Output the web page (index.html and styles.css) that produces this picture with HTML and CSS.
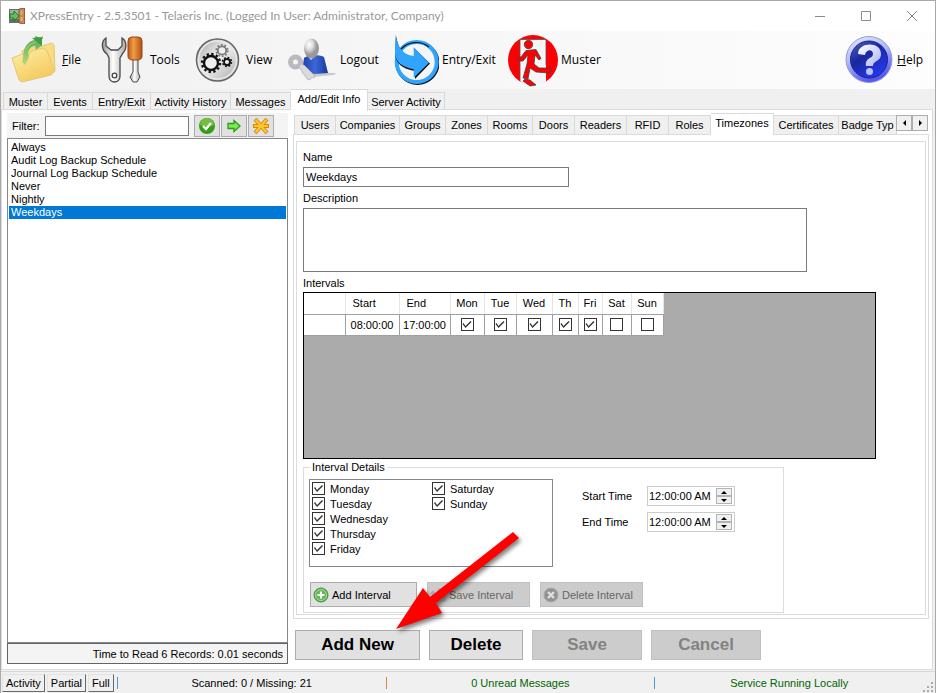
FILE: index.html
```html
<!DOCTYPE html>
<html lang="en">
<head>
<meta charset="utf-8">
<title>XPressEntry</title>
<link rel="stylesheet" href="styles.css">
</head>
<body>
<header class="titlebar">
  <svg class="app-icon" viewBox="0 0 16 16" aria-hidden="true"><rect x="0" y="1" width="11" height="14" fill="#66706a"/><rect x="1" y="2" width="9" height="9" fill="#9fb0a6"/><path d="M1 6h4V3l5 5-5 5v-3H1z" fill="#58c558" stroke="#176b24" stroke-width=".8"/><path d="M10 1l5.500-1v16l-5.500-1z" fill="#c98a52" stroke="#80451c" stroke-width=".8"/><path d="M11.500 3l2-.5v4l-2 .3zM11.500 9l2 .2v4l-2-.4z" fill="#e0b080"/></svg>
  <h1 class="title">XPressEntry - 2.5.3501 - Telaeris Inc. (Logged In User: Administrator, Company)</h1>
  <div class="window-controls">
    <button aria-label="Minimize"><svg viewBox="0 0 12 12"><path d="M1 6.500h10"/></svg></button>
    <button aria-label="Maximize"><svg viewBox="0 0 12 12"><path d="M1.500 1.500h9v9h-9z"/></svg></button>
    <button aria-label="Close"><svg viewBox="0 0 12 12"><path d="M1 1l10 10M11 1L1 11"/></svg></button>
  </div>
</header>

<nav class="toolbar">
  <button class="tool"><svg viewBox="0 0 50 54" aria-hidden="true">
    <defs><linearGradient id="folder" x2=".6" y2="1"><stop stop-color="#fff0a8"/><stop offset="1" stop-color="#f3c95d"/></linearGradient><linearGradient id="leaf" x2="0" y2="1"><stop stop-color="#3f9d42"/><stop offset="1" stop-color="#8fce78" stop-opacity=".6"/></linearGradient></defs>
    <path d="M13 18l9-6 4 3 17-5 2 2 1 26-5 3-25 4z" fill="#f8dc83" stroke="#e3c873"/>
    <path d="M3 25l13-5 3 3 3-5 12-3 4 3 8 20-4 4-29 7-3-2z" fill="url(#folder)" stroke="#e3c873"/>
    <path d="M14 25C14 12 21 7 27 7l-1-4 8 3-1-4 0 10-6 5-1-4c-6 0-8 7-6 11l-4 8c-3-3-3-4-2-7z" fill="url(#leaf)"/>
    <path d="M23 5l10-1v9" fill="#3f9d42"/>
    <path d="M16 19c3-7 6-9 11-10" fill="none" stroke="#81c66b" stroke-width="2"/></svg><span><u>F</u>ile</span></button>
  <button class="tool"><svg viewBox="0 0 50 54" aria-hidden="true">
    <defs><linearGradient id="steel"><stop stop-color="#999"/><stop offset=".45" stop-color="#fff"/><stop offset="1" stop-color="#aaa"/></linearGradient><linearGradient id="handle"><stop stop-color="#bd5b18"/><stop offset=".4" stop-color="#ef9c48"/><stop offset="1" stop-color="#b44f10"/></linearGradient></defs>
    <path d="M9 5c-5 3-5 12 1 16l2 4v18c0 8 11 8 11 0V25l3-5c4-4 4-12-1-15v8l-4 4h-7l-5-4z" fill="url(#steel)" stroke="#4a4a4a" stroke-width="1.300"/>
    <circle cx="17.500" cy="42.500" r="2.300" fill="#fff" stroke="#444" stroke-width="1.300"/>
    <path d="M36 26h5v13l2 5-3 5h-4l-3-5 3-5z" fill="url(#steel)" stroke="#4a4a4a"/>
    <path d="M31 8q0-4 4-4h6q4 0 4 4v15q0 4-5 4h-4q-5 0-5-4z" fill="url(#handle)" stroke="#974510"/></svg><span>Tools</span></button>
  <button class="tool"><svg viewBox="0 0 50 54" aria-hidden="true">
    <defs><linearGradient id="disc" x2="1" y2="1"><stop stop-color="#9a9a9a"/><stop offset=".45" stop-color="#f2f2f2"/><stop offset="1" stop-color="#a8a8a8"/></linearGradient></defs>
    <circle cx="24.500" cy="27" r="21" fill="url(#disc)" stroke="#666" stroke-width="1.500"/><circle cx="24.500" cy="27" r="19" fill="none" stroke="#e8e8e8" stroke-width="1.500"/>
    <g fill="none" stroke="#111"><circle cx="18" cy="30" r="7" stroke-width="2.400" fill="#eee"/><circle cx="18" cy="30" r="9" stroke-width="2.400" stroke-dasharray="2.350 2.360"/><circle cx="34" cy="29" r="3" stroke-width="1.800" fill="#eee"/><circle cx="34" cy="29" r="4.500" stroke-width="1.600" stroke-dasharray="1.760 1.770"/></g>
    <g fill="none" stroke="#777"><circle cx="29" cy="17.500" r="4.200" stroke-width="1.800" fill="#eee"/><circle cx="29" cy="17.500" r="5.800" stroke-width="1.600" stroke-dasharray="1.820 1.820"/></g></svg><span>View</span></button>
  <button class="tool"><svg viewBox="0 0 50 54" aria-hidden="true">
    <defs><radialGradient id="head" cx=".35" cy=".3"><stop stop-color="#fff"/><stop offset=".5" stop-color="#ddd"/><stop offset="1" stop-color="#999"/></radialGradient><linearGradient id="shirt" x2="1"><stop stop-color="#1c3fae"/><stop offset=".5" stop-color="#3d67d6"/><stop offset="1" stop-color="#17369c"/></linearGradient></defs>
    <path d="M14 39l34 1q2 1-2 2l-20 2z" fill="#c9c9cd"/>
    <path d="M15 39l2-14c2-3 16-4 20-1l4 16-13 1z" fill="url(#shirt)"/><path d="M20 22l4 5 5-5z" fill="#eef"/>
    <ellipse cx="24.500" cy="15.500" rx="7.500" ry="10" fill="url(#head)"/>
    <circle cx="8.500" cy="29" r="5" fill="none" stroke="#b9b9be" stroke-width="5"/><path d="M13 31l4 1 11 11-1 2-2-1-2 3-3-1-8-12z" fill="#dadade" stroke="#b0b0b5" stroke-width=".7"/></svg><span>Logout</span></button>
  <button class="tool"><svg viewBox="0 0 50 54" aria-hidden="true">
    <circle cx="28.500" cy="30" r="20" fill="none" stroke="#111" stroke-width="4"/>
    <circle cx="27.700" cy="29" r="20" fill="#f5f5f5" stroke="#30a5ff" stroke-width="4"/>
    <path d="M12 16A20 19 0 0 1 40 14" fill="none" stroke="#111" stroke-width="1.200"/>
    <path d="M7 3C9 14 13 23 25 23.500V15L41 30.500 26 46V38C13 36 6 30 6 20z" fill="#111"/>
    <path d="M6.700 1.500C8 13 13 22 24.700 23V14.300L40 29.700 24.700 44.700V36.300C12 34 5 28 6 17z" fill="#30a5ff"/></svg><span>Entry/Exit</span></button>
  <button class="tool"><svg viewBox="0 0 50 54" aria-hidden="true">
    <circle cx="25" cy="27" r="25" fill="#fb0005"/><path d="M12 6.500h26v42l-6 3.500h-14l-6-4z" fill="#f5f5f5"/><path d="M12 24V6.500h26V32M12 28v20" fill="none" stroke="#555" stroke-width=".8"/>
    <g fill="#fb0005" stroke="#444" stroke-width=".8"><circle cx="20.500" cy="11.500" r="4.200"/>
    <path d="M18 17.500l10-1 5 9-2 1.500-4-5-1 9 5 4h11l2 3-3 2-13-1-6-4-2 11-5-1 4-14 1-9-5 6h-5v-4h3z"/>
    <path d="M17 46l5 1 6 5-6 1-7-5z"/></g></svg><span>Muster</span></button>
  <button class="tool help"><svg viewBox="0 0 50 54" aria-hidden="true">
    <defs><linearGradient id="rim" x2=".4" y2="1"><stop stop-color="#e8edff"/><stop offset=".5" stop-color="#aeb9ff"/><stop offset="1" stop-color="#5558f1"/></linearGradient><linearGradient id="ball" x2=".7" y2="1"><stop stop-color="#5265bd"/><stop offset=".45" stop-color="#19279d"/><stop offset="1" stop-color="#2738f2"/></linearGradient><linearGradient id="mark" x2="1" y2="1"><stop stop-color="#fff"/><stop offset="1" stop-color="#aab4f6"/></linearGradient></defs>
    <circle cx="25" cy="26.500" r="23" fill="url(#rim)" stroke="#9698d4"/><circle cx="25" cy="26.500" r="18.500" fill="url(#ball)" stroke="#17208a"/>
    <path d="M14 21c0-12 23-13 23 0 0 8-8 6-8 12h-7c-1-9 7-7 7-12 0-5-7-5-8 1z" fill="url(#mark)"/><circle cx="25.500" cy="38.500" r="3.500" fill="#b9c2fb"/></svg><span><u>H</u>elp</span></button>
</nav>

<nav class="tabs main-tabs">
  <button>Muster</button><button>Events</button><button>Entry/Exit</button><button>Activity History</button><button>Messages</button><button class="active">Add/Edit Info</button><button>Server Activity</button>
</nav>

<main class="workspace">
  <aside class="sidebar">
    <form class="filter">
      <label for="filter">Filter:</label>
      <input id="filter" type="text">
      <button type="button" aria-label="Apply filter"><svg viewBox="0 0 18 18"><circle cx="9" cy="9" r="8" fill="#359e13"/><path d="M2 8a7 7 0 0 1 14 0q-7 3-14 0z" fill="#74bd43"/><path d="M5 9l3 3 5-6" fill="none" stroke="#fff" stroke-width="2.300"/></svg></button>
      <button type="button" aria-label="Next"><svg viewBox="0 0 18 18"><path d="M3 6.500h6v-3l6 5.500-6 5.500v-3H3z" fill="#7dea50" stroke="#2b9b1b" stroke-width="1.300"/></svg></button>
      <button type="button" aria-label="Show all"><svg viewBox="0 0 18 18"><g fill="none" stroke="#d48909" stroke-width="4"><path d="M1 9h16M3 2l6 7 6-7M3 16l6-7 6 7"/></g><g fill="none" stroke="#ffc62d" stroke-width="2.200"><path d="M2 9h14M3.500 2.500L9 9l5.500-6.500M3.500 15.500L9 9l5.500 6.500"/></g></svg></button>
    </form>
    <ul class="records">
      <li>Always</li><li>Audit Log Backup Schedule</li><li>Journal Log Backup Schedule</li><li>Never</li><li>Nightly</li><li class="selected">Weekdays</li>
    </ul>
    <div class="timing">Time to Read 6 Records: 0.01 seconds</div>
  </aside>

  <section class="editor">
    <div class="subnav">
      <nav class="tabs sub-tabs">
        <button>Users</button><button>Companies</button><button>Groups</button><button>Zones</button><button>Rooms</button><button>Doors</button><button>Readers</button><button>RFID</button><button>Roles</button><button class="active">Timezones</button><button>Certificates</button><button>Badge Typ</button>
      </nav>
      <div class="scrollers"><button aria-label="Scroll left"><i class="tri left"></i></button><button aria-label="Scroll right"><i class="tri right"></i></button></div>
    </div>
    <div class="frame">
      <form class="details">
        <label for="name">Name</label>
        <input id="name" class="field" type="text" value="Weekdays">
        <label for="description">Description</label>
        <textarea id="description" class="field"></textarea>
        <span class="caption" id="intervals-label">Intervals</span>
        <div class="grid">
          <table aria-labelledby="intervals-label">
            <colgroup><col class="c-head"><col class="c-start"><col class="c-end"><col class="c-mon"><col class="c-tue"><col class="c-wed"><col class="c-thu"><col class="c-fri"><col class="c-sat"><col class="c-sun"></colgroup>
            <thead><tr><th></th><th class="time">Start</th><th class="time">End</th><th>Mon</th><th>Tue</th><th>Wed</th><th>Th</th><th>Fri</th><th>Sat</th><th>Sun</th></tr></thead>
            <tbody><tr><td></td><td>08:00:00</td><td>17:00:00</td><td><input type="checkbox" aria-label="Mon" checked></td><td><input type="checkbox" aria-label="Tue" checked></td><td><input type="checkbox" aria-label="Wed" checked></td><td><input type="checkbox" aria-label="Th" checked></td><td><input type="checkbox" aria-label="Fri" checked></td><td><input type="checkbox" aria-label="Sat"></td><td><input type="checkbox" aria-label="Sun"></td></tr></tbody>
          </table>
        </div>
        <fieldset class="interval">
          <legend>Interval Details</legend>
          <div class="interval-top">
            <div class="days">
              <label><input type="checkbox" checked>Monday</label><label><input type="checkbox" checked>Tuesday</label><label><input type="checkbox" checked>Wednesday</label><label><input type="checkbox" checked>Thursday</label><label><input type="checkbox" checked>Friday</label><label><input type="checkbox" checked>Saturday</label><label><input type="checkbox" checked>Sunday</label>
            </div>
            <div class="times">
              <label for="start">Start Time</label>
              <div class="spinner"><input id="start" type="text" value="12:00:00 AM"><div><button type="button" aria-label="Start later"><i class="tri up"></i></button><button type="button" aria-label="Start earlier"><i class="tri down"></i></button></div></div>
              <label for="end">End Time</label>
              <div class="spinner"><input id="end" type="text" value="12:00:00 AM"><div><button type="button" aria-label="End later"><i class="tri up"></i></button><button type="button" aria-label="End earlier"><i class="tri down"></i></button></div></div>
            </div>
          </div>
          <div class="interval-actions">
            <button type="button"><svg viewBox="0 0 16 16"><circle cx="8" cy="8" r="7" fill="#62b454" stroke="#3f9140"/><circle cx="8" cy="8" r="5.500" fill="none" stroke="#a9dc9d"/><path d="M8 4.500v7M4.500 8h7" stroke="#fff" stroke-width="2.200"/></svg>Add Interval</button>
            <button type="button" disabled><svg viewBox="0 0 16 16"><path d="M3 3l3 4H4v5H2V7H0z" fill="#aaa"/><path d="M8 2h7v12H8z" fill="#c2c2c2" stroke="#b0b0b0"/></svg>Save Interval</button>
            <button type="button" disabled><svg viewBox="0 0 16 16"><circle cx="8" cy="8" r="7" fill="#929292" stroke="#aaa"/><path d="M5 5l6 6M11 5l-6 6" stroke="#e0e0e0" stroke-width="2.400"/></svg>Delete Interval</button>
          </div>
        </fieldset>
      </form>
    </div>
    <div class="actions">
      <button class="wide">Add New</button><button class="narrow">Delete</button><button disabled>Save</button><button disabled>Cancel</button>
      <svg class="pointer" viewBox="0 0 132 106" aria-hidden="true"><path d="M2 98L29 57l7 9L119 1l6 6L42 72l6 10z" fill="#fe0000"/></svg>
    </div>
  </section>
</main>

<footer class="status">
  <div class="status-buttons"><button>Activity</button><button>Partial</button><button>Full</button></div>
  <div class="cell blue">Scanned: 0 / Missing: 21</div>
  <div class="cell orange green">0 Unread Messages</div>
  <div class="cell blue green">Service Running Locally</div>
  <svg class="grip" viewBox="0 0 11 11" aria-hidden="true"><path d="M8 0h2v2H8zM4 4h2v2H4zM8 4h2v2H8zM0 8h2v2H0zM4 8h2v2H4zM8 8h2v2H8z" fill="#aaa"/></svg>
</footer>
</body>
</html>
```
FILE: styles.css
```css
* { box-sizing: border-box; }

body {
  margin: 0;
  min-height: 100vh;
  display: flex;
  flex-direction: column;
  border: 1px solid #a8a8a8;
  background: #f0f0f0;
  color: #000;
  font: 11px/14px "Liberation Sans", Arial, sans-serif;
}

button, input, textarea { font: inherit; color: inherit; margin: 0; }
button { padding: 0; border-radius: 0; white-space: nowrap; }
svg { display: block; flex: none; }

/* Title bar */
.titlebar { display: flex; align-items: center; height: 30px; padding-left: 8px; background: #fff; }
.app-icon { width: 16px; height: 16px; }
.title { margin: 0 auto 0 5px; color: #999; font: 12px/16px Lato, "Open Sans", sans-serif; white-space: nowrap; }
.window-controls { display: flex; }
.window-controls button { width: 46px; height: 28px; border: 0; background: none; display: grid; place-items: center; }
.window-controls svg { width: 12px; height: 12px; fill: none; stroke: #8c8c8c; }

/* Toolbar */
.toolbar {
  display: grid;
  grid-template-columns: 88px 96px 94px 102px 119px 1fr auto;
  align-items: center;
  height: 58px;
  padding: 0 12px 0 8px;
  background: linear-gradient(90deg, #f1f1f1, #fdfdfd);
}
.tool { display: flex; align-items: center; gap: 3px; padding: 0; border: 0; background: none; font: 12px/16px "Open Sans", "Noto Sans", sans-serif; }
.tool svg { width: 50px; height: 54px; }

/* Tabs */
.tabs { display: grid; align-items: end; }
.tabs button { height: 18px; border: 1px solid #d9d9d9; border-width: 1px 1px 0 0; background: #f0f0f0; }
.tabs button:first-child { border-left-width: 1px; }
.tabs .active { height: 21px; padding-bottom: 3px; margin-bottom: -1px; background: #fff; position: relative; }
.main-tabs { grid-template-columns: 45px 45px 58px 80px 60px 77px 77px; height: 20px; padding-left: 2px; }
.main-tabs .active { height: 22px; }

/* Workspace */
.workspace {
  flex: 1;
  display: flex;
  gap: 5px;
  margin-right: 2px;
  padding: 3px 3px 5px 5px;
  border: 1px solid #dcdcdc;
  background: #fff;
}

.sidebar { width: 281px; flex: none; display: flex; flex-direction: column; }
.filter { display: flex; align-items: center; gap: 1px; height: 25px; padding-left: 5px; background: #f4f4f4; }
.filter label { width: 32px; }
.filter input { width: 144px; height: 20px; margin-right: 4px; border: 1px solid #7a7a7a; background: #fff; }
.filter button { width: 26px; height: 22px; display: grid; place-items: center; border: 1px solid #adadad; background: #e1e1e1; }
.filter svg { width: 18px; height: 18px; }
.records { flex: 1; margin: 0; padding: 2px 1px; list-style: none; border: 1px solid #828790; }
.records li { height: 13px; padding-left: 2px; line-height: 13px; }
.records .selected { background: #0078d7; color: #fff; }
.timing { height: 21px; padding: 3px 4px; border: 1px solid #646464; background: #f4f4f4; text-align: right; }

/* Editor */
.editor { flex: 1; min-width: 0; display: flex; flex-direction: column; }
.subnav { display: flex; height: 21px; padding-left: 1px; }
.sub-tabs { flex: 1; min-width: 0; grid-template-columns: 42px 64px 46px 42px 45px 42px 52px 42px 42px 63px 65px 58px; }
.sub-tabs button { height: 19px; }
.sub-tabs .active { height: 22px; }
.scrollers { display: flex; margin: 2px 1px 3px 0; }
.scrollers button { width: 16px; display: grid; place-items: center; border: 1px solid #adadad; background: #f0f0f0; }
.tri { width: 0; height: 0; border: 3px solid transparent; }
.left { border-right-color: #000; border-left-width: 0; }
.right { border-left-color: #000; border-right-width: 0; }
.up { border-bottom-color: #000; border-top-width: 0; }
.down { border-top-color: #000; border-bottom-width: 0; }

.frame { flex: 1; padding: 6px 2px 3px; border: 1px solid #dcdcdc; }
.details { height: 100%; display: flex; flex-direction: column; align-items: flex-start; padding: 8px 6px 1px; border: 1px solid #dcdcdc; }
.field { width: 504px; max-width: 100%; border: 1px solid #7a7a7a; margin: 3px 0 4px; padding: 0 2px; background: #fff; }
input.field { width: 266px; height: 20px; }
textarea.field { height: 64px; resize: none; }

.grid { width: 573px; max-width: 100%; height: 167px; margin-top: 2px; border: 1px solid #000; background: #ababab; }
table { table-layout: fixed; width: 359px; border-collapse: collapse; background: #fff; }
th, td { height: 21px; padding: 0; border: 1px solid #a0a0a0; font-weight: 400; text-align: center; vertical-align: middle; }
table tr > :first-child { border-left: 0; }
thead th { border-top: 0; border-left-color: #e5e5e5; border-right-color: #e5e5e5; }
th.time { padding-left: 7px; text-align: left; }
.c-head { width: 41px; }
.c-start { width: 54px; }
.c-end { width: 51px; }
.c-mon { width: 34px; }
.c-tue { width: 32px; }
.c-wed { width: 36px; }
.c-thu { width: 26px; }
.c-fri { width: 24px; }
.c-sat { width: 29px; }
.c-sun { width: 32px; }

input[type="checkbox"] { appearance: none; display: block; flex: none; width: 13px; height: 13px; border: 1px solid #333; background: #fff; }
td input[type="checkbox"] { margin: 0 auto; }
input[type="checkbox"]:checked::before {
  content: "";
  display: block;
  width: 11px;
  height: 11px;
  background: #333;
  clip-path: polygon(1px 5px, 2px 4px, 4px 7px, 9px 2px, 10px 3px, 4px 9px);
}

.interval { width: 481px; max-width: 100%; margin: 1px 0 0; padding: 5px 5px 5px; border: 1px solid #dcdcdc; }
.interval legend { margin-left: 1px; padding: 0 2px; }
.interval-top { display: flex; gap: 29px; }
.days { width: 244px; height: 88px; display: grid; grid-template-rows: repeat(5, 15px); grid-auto-columns: 120px; grid-auto-flow: column; padding: 1px 2px; border: 1px solid #828790; }
.days label { display: flex; align-items: center; gap: 5px; }
.times { display: grid; grid-template-columns: 65px 88px; gap: 6px 0; align-content: start; align-items: center; padding-top: 7px; }
.spinner { display: flex; height: 20px; padding: 1px 2px 1px 1px; border: 1px solid #ccc; background: #fff; }
.spinner input { flex: 1; width: 0; padding: 0; border: 0; background: none; }
.spinner div { width: 16px; display: grid; }
.spinner button { display: grid; place-items: center; border: 1px solid #b4b4b4; background: #f0f0f0; }
.interval-actions { display: flex; gap: 10px; margin: 15px 0 0 1px; }
.interval-actions button { display: flex; align-items: center; gap: 3px; width: 103px; height: 25px; padding-left: 2px; border: 1px solid #adadad; background: #e1e1e1; }
.interval-actions button:first-child { width: 107px; }
.interval-actions svg { width: 16px; height: 16px; }

button:disabled, .interval-actions button:disabled, .actions button:disabled { border-color: #bfbfbf; background: #ccc; color: #838383; }
.interval-actions button:disabled { color: #666; }

.actions { position: relative; display: flex; gap: 9px; margin: 11px 0 4px 2px; }
.actions button { width: 110px; height: 30px; border: 1px solid #adadad; background: #e1e1e1; font: bold 17px/20px "Liberation Sans", Arial, sans-serif; }
.actions .wide { width: 125px; }
.actions .narrow { width: 94px; }
.pointer { position: absolute; left: 99px; bottom: 23px; width: 132px; height: 106px; overflow: visible; filter: drop-shadow(2px 3px 2px rgba(0, 0, 0, .5)); pointer-events: none; }

/* Status bar */
.status { display: flex; align-items: center; height: 23px; margin-top: 1px; padding: 0 1px 1px; border-top: 1px solid #d7d7d7; }
.status-buttons { display: flex; gap: 2px; margin-right: 3px; }
.status-buttons button { height: 18px; padding: 0 3px; border: 1px solid #e3e3e3; border-right-color: #696969; border-bottom-color: #696969; background: #f0f0f0; }
.cell { flex: 1; height: 12px; line-height: 12px; border-left: 1px solid; text-align: center; }
.cell.blue { border-image: linear-gradient(#4a9bdc, #4a9bdc) 1; }
.cell.orange { border-image: linear-gradient(#d68d3c, #d68d3c) 1; }
.green { color: #006400; }
.grip { width: 11px; height: 11px; align-self: flex-end; }
```
